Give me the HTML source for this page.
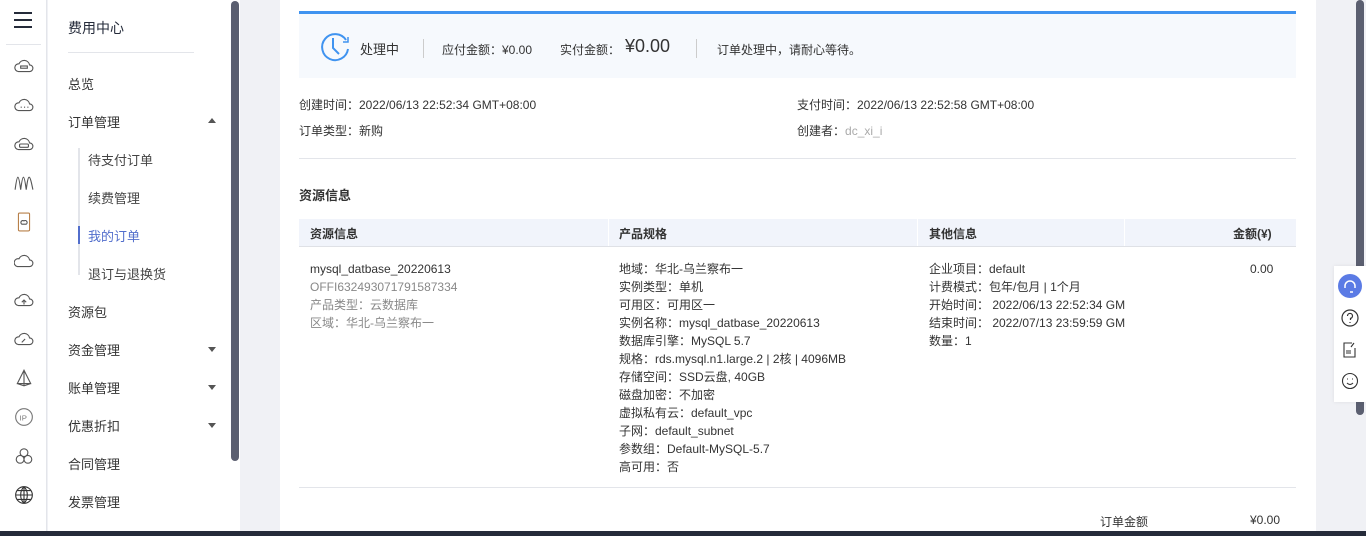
<!DOCTYPE html>
<html><head><meta charset="utf-8"><style>
*{margin:0;padding:0;box-sizing:border-box}
body{width:1366px;height:536px;overflow:hidden;background:#f0f1f5;font-family:"Liberation Sans","Noto Sans CJK SC",sans-serif;font-size:12px;color:#333;position:relative}
.a{position:absolute;white-space:nowrap}
#ib{left:0;top:0;width:47px;height:536px;background:#fff;border-right:1px solid #e3e5ea}
#mp{left:48px;top:0;width:192px;height:536px;background:#fff}
.mi{position:absolute;left:20px;font-size:13px;color:#333}
.sub{position:absolute;left:40px;font-size:13px;color:#444}
.ic{position:absolute;left:14px;width:20px;height:20px}
#card{left:280px;top:0;width:1036px;height:536px;background:#fff}
.th{font-weight:bold;font-size:12px;color:#333}
.c{position:absolute;line-height:18px;font-size:12px;color:#333}
.g{color:#888}
</style></head><body>
<div class="a" id="ib">
 <div class="a" style="left:14px;top:12px;width:18px;height:2px;background:#252b3a"></div>
 <div class="a" style="left:14px;top:19px;width:18px;height:2px;background:#252b3a"></div>
 <div class="a" style="left:14px;top:26px;width:18px;height:2px;background:#252b3a"></div>
 <div class="a" style="left:6px;top:44px;width:35px;height:1px;background:#e3e5ea"></div>
 <svg class="ic" style="top:56px" viewBox="0 0 18 18" fill="none" stroke="#555" stroke-width="1"><path d="M4 14h10a3 3 0 0 0 0-6 5 5 0 0 0-9.5-1A3.5 3.5 0 0 0 4 14z"/><rect x="6" y="9" width="6" height="2"/></svg>
 <svg class="ic" style="top:95px" viewBox="0 0 18 18" fill="none" stroke="#555" stroke-width="1"><path d="M4 14h10a3 3 0 0 0 0-6 5 5 0 0 0-9.5-1A3.5 3.5 0 0 0 4 14z"/><path d="M6 11h1M9 11h1M12 11h1"/></svg>
 <svg class="ic" style="top:134px" viewBox="0 0 18 18" fill="none" stroke="#555" stroke-width="1"><path d="M4 14h10a3 3 0 0 0 0-6 5 5 0 0 0-9.5-1A3.5 3.5 0 0 0 4 14z"/><rect x="5" y="9" width="8" height="3" rx="1"/></svg>
 <svg class="ic" style="top:173px" viewBox="0 0 18 18" fill="none" stroke="#555" stroke-width="1"><path d="M1 15C3 0 4 0 6 15C8 0 9 0 11 15C13 0 14 0 17 15"/></svg>
 <svg class="ic" style="top:212px" viewBox="0 0 18 18" fill="none" stroke="#555" stroke-width="1"><rect x="4" y="1" width="10" height="16" rx="1" stroke="#b8804a"/><path d="M7 11h4a1.5 1.5 0 0 0-2-3 1.5 1.5 0 0 0-2 3z"/></svg>
 <svg class="ic" style="top:251px" viewBox="0 0 18 18" fill="none" stroke="#555" stroke-width="1"><path d="M3 14h11a3 3 0 0 0 0-6 5 5 0 0 0-9.5-1A3.5 3.5 0 0 0 3 14z"/></svg>
 <svg class="ic" style="top:290px" viewBox="0 0 18 18" fill="none" stroke="#555" stroke-width="1"><path d="M4 14h10a3 3 0 0 0 0-6 5 5 0 0 0-9.5-1A3.5 3.5 0 0 0 4 14z"/><path d="M9 13V9M7 11l2-2 2 2"/></svg>
 <svg class="ic" style="top:329px" viewBox="0 0 18 18" fill="none" stroke="#555" stroke-width="1"><path d="M4 14h10a3 3 0 0 0 0-6 5 5 0 0 0-9.5-1A3.5 3.5 0 0 0 4 14z"/><path d="M7 12l3-3"/></svg>
 <svg class="ic" style="top:368px" viewBox="0 0 18 18" fill="none" stroke="#555" stroke-width="1"><path d="M9 2L3 14h12zM9 2v14M3 14l6 2 6-2"/></svg>
 <svg class="ic" style="top:407px" viewBox="0 0 18 18" fill="none" stroke="#777" stroke-width="1"><circle cx="9" cy="9" r="7.5"/><text x="5" y="12" font-size="7" fill="#777" stroke="none" font-family="Liberation Sans">IP</text></svg>
 <svg class="ic" style="top:446px" viewBox="0 0 18 18" fill="none" stroke="#555" stroke-width="1"><circle cx="9" cy="6" r="3.5"/><circle cx="5.5" cy="12" r="3.5"/><circle cx="12.5" cy="12" r="3.5"/></svg>
 <svg class="ic" style="top:485px" viewBox="0 0 18 18" fill="none" stroke="#333" stroke-width="1"><circle cx="9" cy="9" r="7.5"/><path d="M1.5 9h15M9 1.5v15M3 5h12M3 13h12M9 1.5c-4 4-4 11 0 15M9 1.5c4 4 4 11 0 15"/></svg>
</div>
<div class="a" id="mp">
 <div class="mi" style="top:18px;font-size:14px;color:#252b3a">费用中心</div>
 <div class="a" style="left:20px;top:52px;width:126px;height:1px;background:#e3e5ea"></div>
 <div class="mi" style="top:74px">总览</div>
 <div class="mi" style="top:112px">订单管理</div>
 <div class="a" style="left:160px;top:118px;border:4px solid transparent;border-bottom:5px solid #555;border-top:0"></div>
 <div class="a" style="left:30px;top:148px;width:2px;height:127px;background:#e3e5ea"></div>
 <div class="a" style="left:30px;top:226px;width:2px;height:18px;background:#526ecc"></div>
 <div class="sub" style="top:150px">待支付订单</div>
 <div class="sub" style="top:188px">续费管理</div>
 <div class="sub" style="top:226px;color:#526ecc">我的订单</div>
 <div class="sub" style="top:264px">退订与退换货</div>
 <div class="mi" style="top:302px">资源包</div>
 <div class="mi" style="top:340px">资金管理</div>
 <div class="mi" style="top:378px">账单管理</div>
 <div class="mi" style="top:416px">优惠折扣</div>
 <div class="mi" style="top:454px">合同管理</div>
 <div class="mi" style="top:492px">发票管理</div>
 <div class="a" style="left:160px;top:347px;border:4px solid transparent;border-top:5px solid #555;border-bottom:0"></div>
 <div class="a" style="left:160px;top:385px;border:4px solid transparent;border-top:5px solid #555;border-bottom:0"></div>
 <div class="a" style="left:160px;top:423px;border:4px solid transparent;border-top:5px solid #555;border-bottom:0"></div>
 <div class="a" style="left:183px;top:1px;width:8px;height:460px;border-radius:4px;background:#5b5f70"></div>
</div>
<div class="a" id="card">
 <div class="a" style="left:19px;top:11px;width:997px;height:67px;background:#f6f9fd;border-top:3px solid #3f93f0"></div>
 <svg class="a" style="left:38px;top:30px" width="34" height="34" viewBox="0 0 34 34" fill="none" stroke="#3f93f0" stroke-width="2"><path d="M28 10A13 13 0 1 0 30 19"/><path d="M15 8v10l6 6"/><path d="M30 7v5h-5" stroke-width="1.5"/></svg>
 <div class="a" style="left:80px;top:39px;font-size:13px">处理中</div>
 <div class="a" style="left:143px;top:39px;width:1px;height:19px;background:#ccc"></div>
 <div class="a" style="left:162px;top:41px">应付金额：¥0.00</div>
 <div class="a" style="left:280px;top:41px">实付金额：</div>
 <div class="a" style="left:345px;top:36px;font-size:18px">¥0.00</div>
 <div class="a" style="left:416px;top:39px;width:1px;height:19px;background:#ccc"></div>
 <div class="a" style="left:437px;top:41px">订单处理中，请耐心等待。</div>
 <div class="a" style="left:19px;top:96px">创建时间：2022/06/13 22:52:34 GMT+08:00</div>
 <div class="a" style="left:19px;top:122px">订单类型：新购</div>
 <div class="a" style="left:517px;top:96px">支付时间：2022/06/13 22:52:58 GMT+08:00</div>
 <div class="a" style="left:517px;top:122px">创建者：<span style="color:#aaa">dc_xi_i</span></div>
 <div class="a" style="left:19px;top:158px;width:997px;height:1px;background:#e3e5ea"></div>
 <div class="a th" style="left:19px;top:185px;font-size:13px">资源信息</div>
 <div class="a" style="left:19px;top:219px;width:997px;height:28px;background:#f1f4fb;border-bottom:1px solid #dfe1e6"></div>
 <div class="a" style="left:328px;top:219px;width:1px;height:27px;background:#fff"></div>
 <div class="a" style="left:637px;top:219px;width:1px;height:27px;background:#fff"></div>
 <div class="a" style="left:844px;top:219px;width:1px;height:27px;background:#fff"></div>
 <div class="a th" style="left:30px;top:225px">资源信息</div>
 <div class="a th" style="left:339px;top:225px">产品规格</div>
 <div class="a th" style="left:649px;top:225px">其他信息</div>
 <div class="a th" style="left:953px;top:225px">金额(¥)</div>
 <div class="c" style="left:30px;top:260px">mysql_datbase_20220613<br><span class="g">OFFI632493071791587334<br>产品类型：云数据库<br>区域：华北-乌兰察布一</span></div>
 <div class="c" style="left:339px;top:260px">地域：华北-乌兰察布一<br>实例类型：单机<br>可用区：可用区一<br>实例名称：mysql_datbase_20220613<br>数据库引擎：MySQL 5.7<br>规格：rds.mysql.n1.large.2 | 2核 | 4096MB<br>存储空间：SSD云盘, 40GB<br>磁盘加密：不加密<br>虚拟私有云：default_vpc<br>子网：default_subnet<br>参数组：Default-MySQL-5.7<br>高可用：否</div>
 <div class="c" style="left:649px;top:260px;width:196px;overflow:hidden">企业项目：default<br>计费模式：包年/包月 | 1个月<br>开始时间： 2022/06/13 22:52:34 GMT+08:00<br>结束时间： 2022/07/13 23:59:59 GMT+08:00<br>数量：1</div>
 <div class="c" style="left:970px;top:260px">0.00</div>
 <div class="a" style="left:19px;top:487px;width:997px;height:1px;background:#e3e5ea"></div>
 <div class="a" style="left:820px;top:513px">订单金额</div>
 <div class="a" style="left:970px;top:513px">¥0.00</div>
</div>
<div class="a" style="left:1356px;top:0;width:8px;height:415px;border-radius:4px;background:#5b5f70"></div>
<div class="a" style="left:1334px;top:266px;width:32px;height:136px;background:#fff;box-shadow:0 0 4px rgba(0,0,0,.08)"></div>
<div class="a" style="left:1338px;top:274px;width:24px;height:24px;border-radius:12px;background:#5b7be5"></div>
<svg class="a" style="left:1342px;top:278px" width="16" height="16" viewBox="0 0 16 16" fill="none" stroke="#fff" stroke-width="1.5"><path d="M3 10V8a5 5 0 0 1 10 0v2M8 14h3"/></svg>
<svg class="a" style="left:1340px;top:308px" width="20" height="20" viewBox="0 0 20 20" fill="none" stroke="#333" stroke-width="1.2"><circle cx="10" cy="10" r="8"/><path d="M7.5 8a2.5 2.5 0 1 1 3 2.4V12M10 14v1"/></svg>
<svg class="a" style="left:1341px;top:341px" width="18" height="18" viewBox="0 0 18 18" fill="none" stroke="#333" stroke-width="1.1"><path d="M11 2H3v14h11V7M5 10h5M5 12h5M13 2l-3 4"/></svg>
<svg class="a" style="left:1341px;top:372px" width="18" height="18" viewBox="0 0 18 18" fill="none" stroke="#333" stroke-width="1.1"><circle cx="9" cy="9" r="7.5"/><path d="M6 7h1M11 7h1M6 11c2 2 4 2 6 0"/></svg>
<div class="a" style="left:0;top:531px;width:1366px;height:5px;background:#252b3a"></div>
</body></html>
